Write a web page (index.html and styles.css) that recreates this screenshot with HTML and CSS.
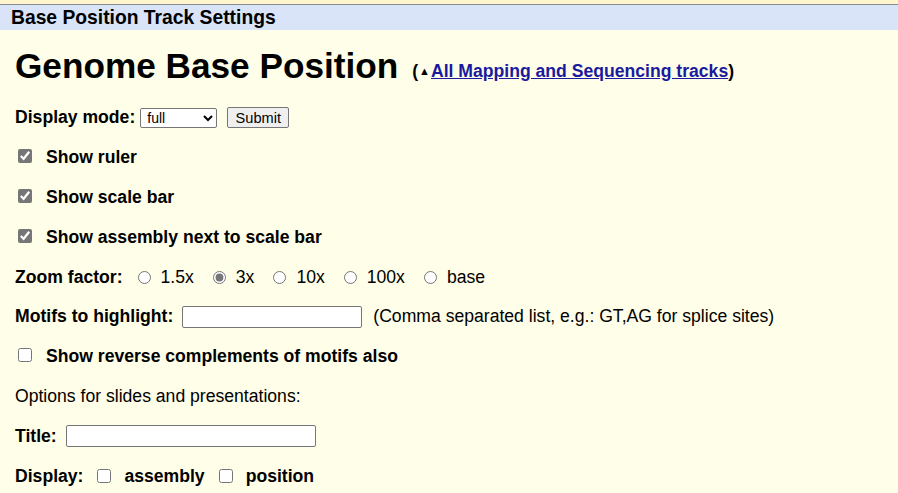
FILE: index.html
```html
<!DOCTYPE html>
<html>
<head>
<meta charset="utf-8">
<link rel="stylesheet" href="styles.css">
</head>
<body>
<div class="topgap"></div>
<div class="bar">Base Position Track Settings</div>
<div class="content">
  <div class="heading">
    <span class="h1">Genome Base Position</span>
    <span class="group">(<span class="tri">&#9650;</span><a href="#">All Mapping and Sequencing tracks</a>)</span>
  </div>
  <div class="row">
    <b>Display mode:</b>
    <select class="sel"><option>full</option></select>
    <button class="btn">Submit</button>
  </div>
  <div class="row"><label class="cb"><input type="checkbox" checked><b>Show ruler</b></label></div>
  <div class="row"><label class="cb"><input type="checkbox" checked><b>Show scale bar</b></label></div>
  <div class="row"><label class="cb"><input type="checkbox" checked><b>Show assembly next to scale bar</b></label></div>
  <div class="row">
    <b>Zoom factor:</b>
    <label class="rd"><input type="radio" name="z">1.5x</label>
    <label class="rd"><input type="radio" name="z" checked>3x</label>
    <label class="rd"><input type="radio" name="z">10x</label>
    <label class="rd"><input type="radio" name="z">100x</label>
    <label class="rd"><input type="radio" name="z">base</label>
  </div>
  <div class="row">
    <b>Motifs to highlight:</b>
    <input type="text" class="motif">
    <span class="note">(Comma separated list, e.g.: GT,AG for splice sites)</span>
  </div>
  <div class="row"><label class="cb"><input type="checkbox"><b>Show reverse complements of motifs also</b></label></div>
  <div class="row"><span>Options for slides and presentations:</span></div>
  <div class="row">
    <b>Title:</b>
    <input type="text" class="title">
  </div>
  <div class="row">
    <b>Display:</b>
    <label class="cb2"><input type="checkbox"><b>assembly</b></label>
    <label class="cb2"><input type="checkbox"><b>position</b></label>
  </div>
</div>
</body>
</html>
```
FILE: styles.css
```css
html, body {
  margin: 0;
  padding: 0;
  background: #FFFEE8;
  font-family: "Liberation Sans", Arial, sans-serif;
  font-size: 17.6px;
  color: #000;
}
.topgap {
  height: 4px;
  border-bottom: 1px solid #8a8a8a;
  background: #FFF6D0;
}
.bar {
  background: #D9E4F8;
  height: 25px;
  line-height: 25px;
  font-weight: bold;
  font-size: 19.3px;
  padding-left: 11px;
}
.content {
  padding-left: 15px;
}
.heading {
  height: 68px;
  display: flex;
  align-items: center;
  box-sizing: border-box;
  padding-top: 4px;
}
.h1 {
  font-size: 35.2px;
  font-weight: bold;
}
.group {
  font-weight: bold;
  font-size: 17.6px;
  margin-left: 14px;
  margin-top: 10px;
}
.tri {
  font-size: 11px;
  position: relative;
  top: -2px;
  margin: 0 1px;
}
.group a {
  color: #1a1a9e;
}
.row {
  height: 39.8px;
  display: flex;
  align-items: center;
}
.sel {
  margin-left: 5px;
  width: 77px;
  height: 20px;
  font-size: 14px;
  font-family: "Liberation Sans", Arial, sans-serif;
  background: #fff;
  border: 1px solid #767676;
  border-radius: 2px;
  padding: 0 0 0 2px;
}
.btn {
  margin-left: 10px;
  height: 21px;
  width: 62px;
  padding: 0;
  font-size: 14.6px;
  font-family: "Liberation Sans", Arial, sans-serif;
  background: #efefef;
  border: 1px solid #767676;
  border-radius: 2px;
}
input[type=checkbox], input[type=radio] {
  accent-color: #767676;
}
.cb input {
  margin: 0 14px 0 3px;
  width: 14px;
  height: 14px;
}
.rd {
  display: flex;
  align-items: center;
}
.rd input {
  margin: 0 10px 0 0;
  width: 13px;
  height: 13px;
}
.row > b + .rd { margin-left: 15px; }
.rd + .rd { margin-left: 19px; }
.motif {
  margin-left: 9px;
  width: 180px;
  height: 22px;
  box-sizing: border-box;
  border: 1px solid #767676;
  border-radius: 2px;
}
.note { margin-left: 11px; }
.title {
  margin-left: 9px;
  width: 250px;
  height: 22px;
  box-sizing: border-box;
  border: 1px solid #767676;
  border-radius: 2px;
}
.cb2 {
  display: flex;
  align-items: center;
}
.cb2 input {
  margin: 0 13px 0 14px;
  width: 14px;
  height: 14px;
}
```
